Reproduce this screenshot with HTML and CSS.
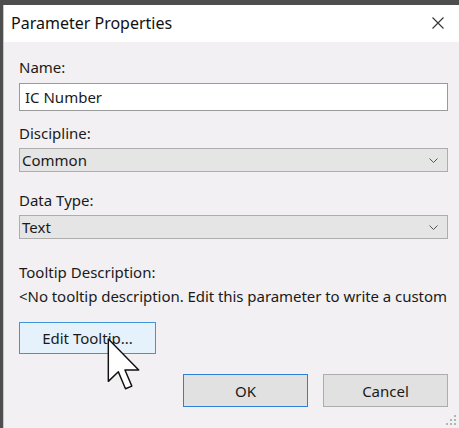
FILE: index.html
```html
<!DOCTYPE html>
<html lang="en">
<head>
    <meta charset="UTF-8">
    <title>Parameter Properties</title>
    <link rel="stylesheet" href="styles.css">
</head>
<body>
    <div class="dialog">
        <div class="title-bar">
            <span class="title">Parameter Properties</span>
            <svg class="close" width="12" height="12" viewBox="0 0 12 12">
                <path d="M0.5 0.5 L11.5 11.5 M11.5 0.5 L0.5 11.5" stroke="#333" stroke-width="1.1" fill="none"/>
            </svg>
        </div>
        <div class="content">
            <label class="field-label">Name:</label>
            <div class="text-input">IC Number</div>

            <label class="field-label">Discipline:</label>
            <div class="combo">
                <span>Common</span>
                <svg class="chevron" width="9" height="5" viewBox="0 0 9 5">
                    <path d="M0.5 0.5 L4.5 4.5 L8.5 0.5" stroke="#555" stroke-width="1" fill="none"/>
                </svg>
            </div>

            <label class="field-label">Data Type:</label>
            <div class="combo">
                <span>Text</span>
                <svg class="chevron" width="9" height="5" viewBox="0 0 9 5">
                    <path d="M0.5 0.5 L4.5 4.5 L8.5 0.5" stroke="#555" stroke-width="1" fill="none"/>
                </svg>
            </div>

            <label class="field-label tooltip-label">Tooltip Description:</label>
            <div class="tooltip-text">&lt;No tooltip description. Edit this parameter to write a custom</div>

            <button class="btn btn-hover">Edit Tooltip...</button>

            <div class="actions">
                <button class="btn btn-default">OK</button>
                <button class="btn">Cancel</button>
            </div>
        </div>

        <!-- mouse pointer over the Edit Tooltip button -->
        <svg class="cursor" width="37" height="57" viewBox="0 0 14 21">
            <path d="M0.5 0.5 L0.5 16.5 L4.3 12.9 L7 19.3 L9.4 18.3 L6.8 12.2 L12 12.2 Z" fill="#fff" stroke="#111" stroke-width="0.55" stroke-linejoin="round"/>
        </svg>

        <div class="grip">
            <span class="dot d1"></span>
            <span class="dot d2"></span>
            <span class="dot d3"></span>
            <span class="dot d4"></span>
            <span class="dot d5"></span>
            <span class="dot d6"></span>
        </div>
    </div>
</body>
</html>
```

FILE: styles.css
```css
body {
    margin: 0;
    background-color: #4e4e4e;
    font-family: "Noto Sans", "Open Sans", sans-serif;
    font-size: 15px;
    color: #1a1a1a;
    overflow: hidden;
}

.dialog {
    position: relative;
    margin: 5px 0 0 3px;
    height: 423px;
    background-color: #f2f0f2;
    border-left: 1px solid #c8c8c8;
    overflow: hidden;
}

.title-bar {
    height: 37px;
    background-color: #fff;
    display: flex;
    align-items: center;
    justify-content: space-between;
    padding: 0 15px 0 7px;
}

.title {
    font-size: 16px;
    color: #111;
    padding-bottom: 2px;
}

.close {
    margin-bottom: 2px;
}

.content {
    padding: 15px 11px 0 15px;
    display: flex;
    flex-direction: column;
    align-items: flex-start;
}

.field-label {
    line-height: 20px;
    margin-bottom: 6px;
}

.text-input {
    box-sizing: border-box;
    width: 100%;
    height: 28px;
    background-color: #fff;
    border: 1px solid #9a9a9a;
    padding: 0 5px;
    line-height: 26px;
    margin-bottom: 12px;
}

.combo {
    box-sizing: border-box;
    width: 100%;
    height: 24px;
    background-color: #e5e5e5;
    border: 1px solid #adadad;
    padding: 0 9px 0 2px;
    display: flex;
    align-items: center;
    justify-content: space-between;
    margin-bottom: 18px;
}

.field-label + .combo {
    margin-top: -1px;
}

.tooltip-label {
    margin-top: 5px;
    margin-bottom: 4px;
}

.tooltip-text {
    white-space: nowrap;
    line-height: 20px;
    letter-spacing: -0.05px;
}

.btn {
    box-sizing: border-box;
    font-family: inherit;
    font-size: 15px;
    color: #1a1a1a;
    background-color: #e1e1e1;
    border: 1px solid #adadad;
    padding: 0;
}

.btn-hover {
    width: 137px;
    height: 32px;
    margin-top: 16px;
    background-color: #e5f1fb;
    border-color: #3f94dc;
}

.actions {
    align-self: flex-end;
    display: flex;
    gap: 15px;
    margin-top: 20px;
}

.actions .btn {
    width: 125px;
    height: 33px;
}

.btn-default {
    border-color: #2f7fd6;
}

.cursor {
    position: absolute;
    left: 103px;
    top: 332px;
}

/* resize grip: small triangle of dots in the corner */
.grip {
    position: absolute;
    right: 3px;
    bottom: 3px;
    width: 10px;
    height: 10px;
}

.dot {
    position: absolute;
    width: 2px;
    height: 2px;
    background-color: #b4b4b4;
}

.d1 { right: 0; bottom: 0; }
.d2 { right: 4px; bottom: 0; }
.d3 { right: 8px; bottom: 0; }
.d4 { right: 0; bottom: 4px; }
.d5 { right: 4px; bottom: 4px; }
.d6 { right: 0; bottom: 8px; }
```
